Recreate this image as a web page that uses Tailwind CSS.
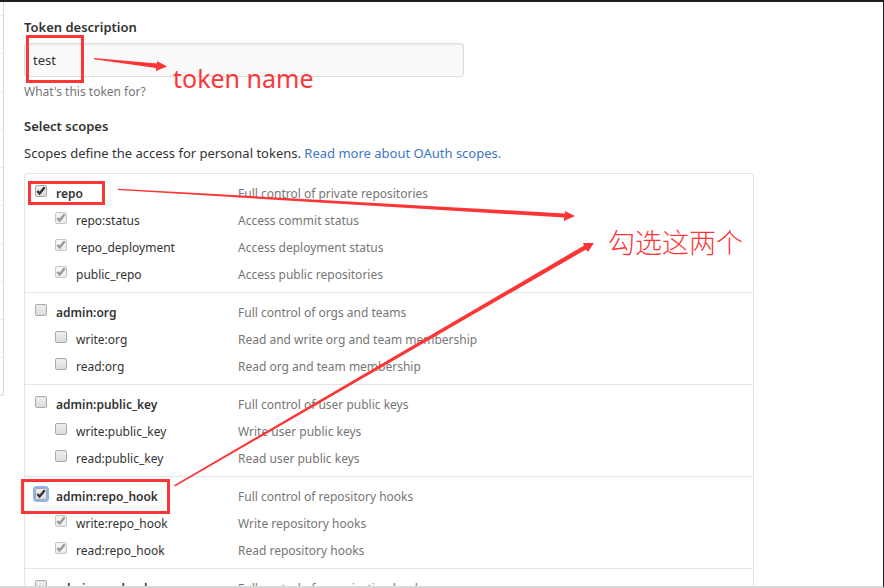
<!DOCTYPE html>
<html lang="en">
<head>
<meta charset="utf-8">
<title>Personal access token</title>
<script src="https://cdn.jsdelivr.net/npm/@tailwindcss/browser@4"></script>
</head>
<body class="bg-white">
<div class="relative flex h-screen overflow-hidden border-t-2 border-r border-b-2 border-t-[#211d1e] border-r-[#211d1e] border-b-[#d8d8d8] font-['Noto_Sans','Noto_Sans_CJK_SC',sans-serif] text-[13px] leading-5 text-[#333]">
  <aside class="w-1 shrink-0">
    <ul id="menu" class="divide-y divide-[#eee] rounded-br-[3px] border-r border-b border-[#d8d8d8]">
      <li class="h-[14px]"></li>
    </ul>
  </aside>

  <main class="min-w-0 flex-1 pl-5 pt-4">
    <form>
      <label for="description" class="block text-[13px] font-semibold leading-[18px]">Token description</label>
      <input id="description" type="text" value="test" class="mt-[7px] block h-[34px] w-[440px] rounded-[3px] border border-[#ddd] bg-[#fafafa] px-2 text-[13px] text-[#333] shadow-[inset_0_1px_2px_rgba(0,0,0,0.075)] outline-none">
      <p class="mt-[5px] text-[12px] text-[#767676]">What's this token for?</p>

      <h2 class="mt-[14px] text-[13px] font-semibold">Select scopes</h2>
      <p class="mt-[7px]">Scopes define the access for personal tokens. <a href="#" class="text-[#4078c0]">Read more about OAuth scopes.</a></p>

      <div id="scopes" class="mt-[10px] w-[730px] divide-y divide-[#e5e5e5] rounded-[3px] border border-[#e5e5e5] text-[12px]"></div>
    </form>
  </main>

  <svg class="pointer-events-none absolute left-0 -top-[2px]" width="884" height="588" viewBox="0 0 884 588" aria-hidden="true">
    <g fill="none" stroke="#fc3636" stroke-width="3">
      <rect x="27.500" y="36.500" width="55" height="45"/>
      <rect x="29.500" y="182.500" width="74" height="21"/>
      <rect x="22.500" y="480.500" width="146" height="32"/>
    </g>
    <g fill="#fc3636">
      <path d="M94 58 L157 63.500 L157 61 L167 66.500 L156 71 L156 68 L94 59.200 Z"/>
      <path d="M118 188.700 L565 213.500 L565 211 L575 216 L564 221 L564 217.500 L118 190 Z"/>
      <path d="M174 485.300 L584 245.500 L583 243 L594 243 L588 252 L586 249.500 L175 486.600 Z"/>
    </g>
  </svg>
  <p class="absolute left-[173px] top-[58px] font-['Noto_Sans',sans-serif] text-[25px] leading-9 text-[#fc3636]">token name</p>
  <p lang="zh-CN" class="absolute left-[608px] top-[220px] font-['Noto_Sans_CJK_SC',sans-serif] text-[27px] font-light leading-10 text-[#fc3636]">勾选这两个</p>
</div>

<script>
const menu = document.getElementById('menu');
for (let i = 0; i < 10; i++) {
  menu.insertAdjacentHTML('beforeend', '<li class="h-[38px] last:h-[37px]"></li>');
}

const groups = [
  [['repo', 'Full control of private repositories', true],
   ['repo:status', 'Access commit status', true],
   ['repo_deployment', 'Access deployment status', true],
   ['public_repo', 'Access public repositories', true]],
  [['admin:org', 'Full control of orgs and teams'],
   ['write:org', 'Read and write org and team membership'],
   ['read:org', 'Read org and team membership']],
  [['admin:public_key', 'Full control of user public keys'],
   ['write:public_key', 'Write user public keys'],
   ['read:public_key', 'Read user public keys']],
  [['admin:repo_hook', 'Full control of repository hooks', true],
   ['write:repo_hook', 'Write repository hooks', true],
   ['read:repo_hook', 'Read repository hooks', true]],
  [['admin:org_hook', 'Full control of organization hooks']],
];

const row = ([name, text, checked], i) => {
  const child = i > 0;
  const disabled = child && checked;
  const focus = name === 'admin:repo_hook';
  return `<li class="grid h-[27px] grid-cols-[213px_1fr] items-center">
    <label class="flex items-center gap-[9px] ${child ? 'pl-[30px]' : 'pl-[10px] font-semibold'}">
      <span class="relative -mt-1.5 block size-3">
        <input type="checkbox" name="${name}" ${checked ? 'checked' : ''} ${disabled ? 'disabled' : ''}
          class="peer block size-3 appearance-none rounded-[2px] border border-[#a9a9a9] bg-linear-to-b from-[#eee] to-[#dcdcdc] disabled:border-[#c6c6c6] disabled:from-[#f6f6f6] disabled:to-[#ececec] ${focus ? 'ring-2 ring-[#8db4f2]' : ''}">
        <svg class="pointer-events-none absolute inset-0 hidden size-3 text-[#333] peer-checked:block peer-disabled:text-[#999]" viewBox="0 0 12 12" fill="none" stroke="currentColor" aria-hidden="true">
          <path d="M2.300 6 L4.600 8.400 L9.700 2.200" stroke-width="2.400"/>
        </svg>
      </span>
      <span class="text-[#333]">${name}</span>
    </label>
    <span class="text-[#767676]">${text}</span>
  </li>`;
};

document.getElementById('scopes').innerHTML =
  groups.map(g => `<ul class="pt-[6px] pb-[4px]">${g.map(row).join('')}</ul>`).join('');
</script>
</body>
</html>
